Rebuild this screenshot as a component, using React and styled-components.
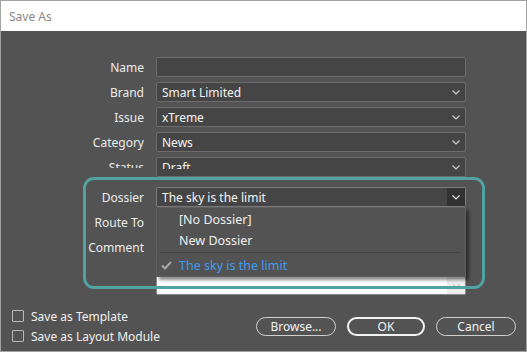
import React from "react";
import styled, { createGlobalStyle } from "styled-components";

const Global = createGlobalStyle`
  html, body { margin: 0; padding: 0; background: #ffffff; }
  body { font-family: "Noto Sans", "Open Sans", sans-serif; }
  * { box-sizing: border-box; }
`;

const Window = styled.div`
  position: relative;
  width: 527px;
  height: 352px;
  border: 1px solid #a3a3a3;
  display: flex;
  flex-direction: column;
  background: #535353;
  font-family: "Noto Sans", sans-serif;
  font-size: 12px;
  line-height: 17px;
  color: #f0f0f0;
  overflow: hidden;
`;

const TitleBar = styled.div`
  height: 30px;
  flex: none;
  background: #ffffff;
  display: flex;
  align-items: center;
  padding-left: 8px;
  color: #878787;
  font-size: 12px;
`;

const Body = styled.div`
  flex: 1;
  display: flex;
  flex-direction: column;
  padding-top: 26px;
`;

const Form = styled.div`
  display: grid;
  grid-template-columns: 143px 310px;
  grid-template-rows: repeat(5, 20px) 0 20px 20px 58px;
  column-gap: 12px;
  row-gap: 5px;
`;

const Spacer = styled.div`
  grid-column: 1 / -1;
`;

const Label = styled.div`
  display: flex;
  align-items: ${(p) => (p.$clip ? "flex-start" : "center")};
  justify-content: flex-end;
  color: #ececec;
  height: ${(p) => (p.$clip ? "11px" : "20px")};
  padding-top: ${(p) => (p.$clip ? "2px" : "0")};
  overflow: hidden;
  align-self: start;
`;

const Field = styled.div`
  position: relative;
  height: 20px;
  border: 1px solid ${(p) => (p.$active ? "#7c7c7c" : "#6c6c6c")};
  border-radius: 2px;
  background: #454545;
  display: flex;
  align-items: center;
  padding-left: 5px;
  color: #f4f4f4;
`;

const FieldText = styled.span`
  flex: 1;
  white-space: nowrap;
  align-self: ${(p) => (p.$clip ? "flex-start" : "center")};
  height: ${(p) => (p.$clip ? "10px" : "auto")};
  margin-top: ${(p) => (p.$clip ? "1px" : "0")};
  overflow: hidden;
`;

const Arrow = styled.div`
  width: 18px;
  height: 100%;
  display: flex;
  align-items: center;
  justify-content: center;
  background: ${(p) => (p.$active ? "#323232" : "transparent")};
`;

const TextArea = styled.div`
  height: 58px;
  border: 1px solid #8a8a8a;
  border-radius: 2px;
  background: #ffffff;
  display: flex;
  justify-content: flex-end;
`;

const ScrollBar = styled.div`
  width: 18px;
  background: #ececec;
  display: flex;
  align-items: flex-end;
  justify-content: center;
  padding-bottom: 5px;
`;

const Menu = styled.div`
  position: absolute;
  left: -1px;
  right: -1px;
  top: 19px;
  z-index: 5;
  background: #535353;
  border: 1px solid #5e5e5e;
  box-shadow: 3px 3px 3px rgba(0, 0, 0, 0.45);
  padding-top: 1px;
  display: flex;
  flex-direction: column;
`;

const Item = styled.div`
  height: 21px;
  display: flex;
  align-items: center;
  padding-left: 4px;
  color: ${(p) => (p.$selected ? "#3f9bf0" : "#f0f0f0")};
  font-size: 12.5px;
`;

const Check = styled.span`
  width: 18px;
  display: inline-flex;
  align-items: center;
`;

const Separator = styled.div`
  height: 1px;
  margin: 1px 4px 2px 2px;
  background: #474747;
`;

const Highlight = styled.div`
  position: absolute;
  left: 82px;
  top: 176px;
  width: 402px;
  height: 112px;
  border: 3px solid #52a2a4;
  border-radius: 11px;
  pointer-events: none;
  z-index: 10;
`;

const Footer = styled.div`
  margin-top: auto;
  height: 40px;
  margin-bottom: 5px;
  display: flex;
  align-items: center;
  justify-content: space-between;
  padding: 0 10px 0 11px;
`;

const Checks = styled.div`
  display: flex;
  flex-direction: column;
`;

const CheckRow = styled.label`
  height: 20px;
  display: flex;
  align-items: center;
  gap: 7px;
  color: #f0f0f0;
`;

const Box = styled.span`
  width: 12px;
  height: 12px;
  border: 1px solid #b9b9b9;
  border-radius: 1px;
  background: #535353;
`;

const Buttons = styled.div`
  display: flex;
  gap: 11px;
`;

const Button = styled.button`
  width: ${(p) => p.$w || 80}px;
  height: 19px;
  border-radius: 10px;
  border: ${(p) => (p.$primary ? "2px solid #f2f2f2" : "1px solid #d0d0d0")};
  background: #535353;
  color: #f2f2f2;
  font-family: "Noto Sans", sans-serif;
  font-size: 12px;
  padding: 0;
  display: flex;
  align-items: center;
  justify-content: center;
`;

const Chevron = ({ color = "#cfcfcf" }) => (
  <svg width="8" height="5" viewBox="0 0 8 5">
    <polyline points="0.5,0.5 4,4 7.5,0.5" fill="none" stroke={color} strokeWidth="1.2" />
  </svg>
);

const Select = ({ value, clip }) => (
  <Field>
    <FieldText $clip={clip}>{value}</FieldText>
    <Arrow>
      <Chevron />
    </Arrow>
  </Field>
);

export default function App() {
  return (
    <>
      <Global />
      <Window>
        <TitleBar>Save As</TitleBar>
        <Body>
          <Form>
            <Label>Name</Label>
            <Field />
            <Label>Brand</Label>
            <Select value="Smart Limited" />
            <Label>Issue</Label>
            <Select value="xTreme" />
            <Label>Category</Label>
            <Select value="News" />
            <Label $clip>Status</Label>
            <Select value="Draft" clip />
            <Spacer />
            <Label>Dossier</Label>
            <Field $active>
              <FieldText>The sky is the limit</FieldText>
              <Arrow $active>
                <Chevron color="#f2f2f2" />
              </Arrow>
              <Menu>
                <Item>
                  <Check />
                  [No Dossier]
                </Item>
                <Item>
                  <Check />
                  New Dossier
                </Item>
                <Separator />
                <Item $selected>
                  <Check>
                    <svg width="11" height="9" viewBox="0 0 11 9">
                      <polyline points="1,4.5 4,7.5 10,1" fill="none" stroke="#a8a8a8" strokeWidth="2" />
                    </svg>
                  </Check>
                  The sky is the limit
                </Item>
              </Menu>
            </Field>
            <Label>Route To</Label>
            <Select value="" />
            <Label>Comment</Label>
            <TextArea>
              <ScrollBar>
                <svg width="7" height="5" viewBox="0 0 7 5">
                  <polyline points="0.5,0.5 3.5,3.5 6.5,0.5" fill="none" stroke="#b8b8b8" strokeWidth="1" />
                </svg>
              </ScrollBar>
            </TextArea>
          </Form>
          <Footer>
            <Checks>
              <CheckRow>
                <Box />
                Save as Template
              </CheckRow>
              <CheckRow>
                <Box />
                Save as Layout Module
              </CheckRow>
            </Checks>
            <Buttons>
              <Button>Browse...</Button>
              <Button $primary $w={78}>OK</Button>
              <Button>Cancel</Button>
            </Buttons>
          </Footer>
        </Body>
        <Highlight />
      </Window>
    </>
  );
}
